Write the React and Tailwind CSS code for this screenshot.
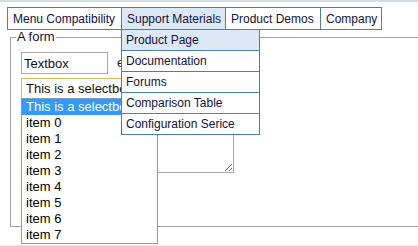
import React from 'react'

const menu = [
  { label: 'Menu Compatibility', w: 'w-[115px] border-l' },
  { label: 'Support Materials', w: 'w-[104px] bg-[#dce8f4]', open: true },
  { label: 'Product Demos', w: 'w-[95px]' },
  { label: 'Company', w: 'w-[61px]' },
]

const subItems = ['Product Page', 'Documentation', 'Forums', 'Comparison Table', 'Configuration Serice']
const options = ['This is a selectbox', 'item 0', 'item 1', 'item 2', 'item 3', 'item 4', 'item 5', 'item 6', 'item 7']

export default function App() {
  return (
    <div className="relative flex h-[246px] w-[418px] flex-col overflow-hidden whitespace-nowrap bg-white font-['Liberation_Sans',Arial,sans-serif] text-[12px] text-[#15123c]">
      <div className="h-[2px] bg-[#d6dce3]" />

      {/* Top menu */}
      <div className="relative z-20 ml-[7px] mt-[5px] flex">
        {menu.map((m) => (
          <div
            key={m.label}
            className={`relative flex h-[23px] items-center border-y border-r border-[#4a7fb2] pl-[5px] ${m.w}`}
          >
            {m.label}
            {m.open && (
              <div className="absolute left-[-1px] top-[21px] w-[139px] border-x border-t border-[#4a7fb2] bg-white">
                {subItems.map((s, i) => (
                  <div
                    key={s}
                    className={`flex h-[21px] items-center border-b border-[#4a7fb2] pl-[4px] ${i === 0 ? 'bg-[#dce8f4]' : ''}`}
                  >
                    {s}
                  </div>
                ))}
              </div>
            )}
          </div>
        ))}
      </div>

      {/* Form */}
      <fieldset className="ml-[10px] w-[420px] border border-[#a3a3a3] pb-[53px]">
        <legend className="ml-[5px] px-[1px] text-[13px] leading-[14px]">A form</legend>
        <div className="pl-[10px] pt-[8px]">
          <div className="flex items-center">
            <input
              readOnly
              value="Textbox"
              className="h-[22px] w-[87px] border border-[#a5a9ae] px-[2px] text-[13px] text-[#111] outline-none"
            />
            <span className="ml-[9px] text-[13px]">enter</span>
          </div>
          <div className="relative mt-[4px] w-[150px] text-[13px]">
            <div className="flex h-[22px] items-center border border-[#e2b95a] pl-[4px] text-[#111]">
              This is a selectbox
            </div>
            <div className="absolute left-0 top-[20px] z-10 w-[137px] border border-[#7f9db9] bg-white text-black">
              {options.map((o, i) => (
                <div
                  key={o}
                  className={`flex h-[16px] items-center pl-[4px] ${i === 0 ? 'bg-[#3399ff] text-white' : ''}`}
                >
                  {o}
                </div>
              ))}
            </div>
          </div>
          <textarea
            readOnly
            className="mt-[5px] block h-[68px] w-[213px] border border-[#a5a9ae] outline-none"
          />
        </div>
      </fieldset>

      <div className="flex-1" />
      <div className="h-[1px] bg-[#e3edf7]" />
    </div>
  )
}
